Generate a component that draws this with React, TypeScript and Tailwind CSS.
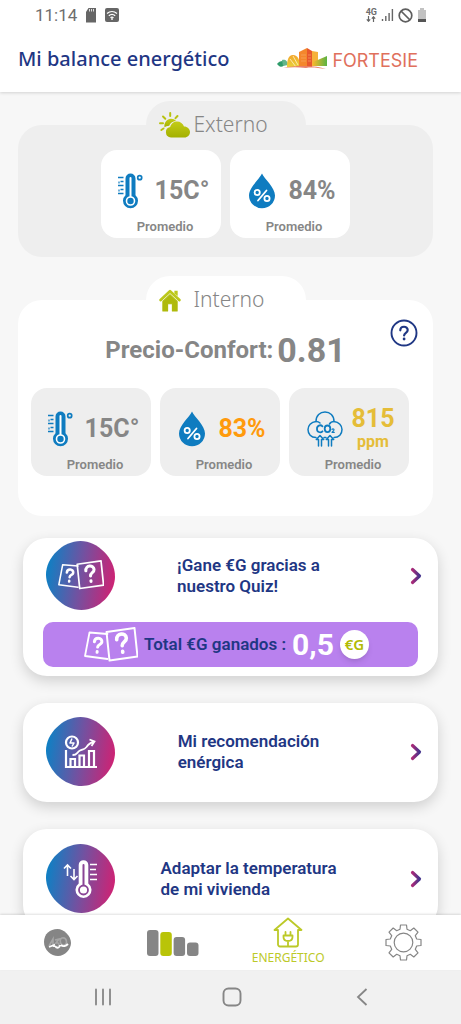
import type { ReactNode } from "react";

const BLUE = "#0f7cc0";

function ThermoIcon() {
  return (
    <svg width="26" height="36" viewBox="0 0 26 36" fill="none" aria-hidden>
      <path
        d="M8.500 5.500a5 5 0 0 1 10 0v16.700a7.500 7.500 0 1 1-10 0z"
        fill={BLUE}
      />
      <path d="M13.500 5v20" stroke="#fff" strokeWidth="2" strokeLinecap="round" />
      <circle cx="13.500" cy="28" r="4" fill={BLUE} stroke="#fff" strokeWidth="1.600" />
      <circle cx="22.700" cy="4.700" r="2" stroke={BLUE} strokeWidth="1.700" />
      <path
        d="M1 4.500h5.500M3.500 8.500h3M1 12.500h5.500M3.500 16.500h3M1 20.500h5.500"
        stroke={BLUE}
        strokeWidth="1.500"
      />
      <path d="M2 10.500v-2M2 18.500v-2" stroke={BLUE} strokeWidth="1.200" />
    </svg>
  );
}

function DropIcon() {
  return (
    <svg width="28" height="36" viewBox="0 0 28 36" fill="none" aria-hidden>
      <path
        d="M14 0.500C16.500 6 27 14.500 27 22.500a13 12.800 0 0 1-26 0C1 14.500 11.500 6 14 0.500z"
        fill={BLUE}
      />
      <g stroke="#fff" strokeWidth="1.800">
        <circle cx="9.200" cy="19.500" r="2.600" />
        <circle cx="19" cy="25.500" r="2.600" />
        <path d="M18.500 17.500l-8.500 10" strokeLinecap="round" />
      </g>
    </svg>
  );
}

function Co2Icon() {
  return (
    <svg width="36" height="36" viewBox="0 0 36 36" fill="none" aria-hidden>
      <g stroke={BLUE} strokeWidth="1.500" strokeLinecap="round" strokeLinejoin="round">
        <path d="M9 26.500C4 26.500 1 23 1 18.500c0-4 3-7.500 8-8C9 4.500 13 1 18 1s9 3.500 9 9.500c5 .5 8 4 8 8 0 4.500-3 8-8 8" />
        <path d="M9 10.500c1.800 0 3 .5 4 1.500M27 10.500c-2 0-3.500.8-4.500 2.500M17 26.500h2" />
        <path d="M11.500 35v-6.500H9.300L13 24.500l3.700 4h-2.200V35M21.500 35v-6.500h-2.200l3.700-4 3.700 4h-2.200V35" />
      </g>
      <g stroke={BLUE} strokeWidth="1.800" strokeLinecap="round" strokeLinejoin="round">
        <path d="M15.500 15.300a3.200 3.200 0 0 0-5.500 2.500 3.200 3.200 0 0 0 5.500 2.500" />
        <ellipse cx="20.500" cy="17.800" rx="2.800" ry="3.300" />
        <path d="M25 18.500c.8-1 2.500-.5 1.800.8L25 21.300h2.300" strokeWidth="1.200" />
      </g>
    </svg>
  );
}

function SunCloudIcon() {
  return (
    <svg width="32" height="26" viewBox="0 0 32 26" fill="none" aria-hidden>
      <defs>
        <linearGradient id="cloud" x1="0" y1="0" x2="0" y2="1">
          <stop offset="0" stopColor="#c3cc18" />
          <stop offset="1" stopColor="#a3b000" />
        </linearGradient>
      </defs>
      <path
        d="M5.500 15.500C4.500 11 8 6.800 12 6.800c2 0 3.800.7 5 2-3.500.5-6 2.500-6.800 5-2 .2-3.500.8-4.700 1.700z"
        fill="url(#cloud)"
      />
      <path
        d="M11.200 1v3M4 4.500l2.300 2.200M1 11.200h3M18.500 4l-2 2.200M2.300 18l2.200-1.500"
        stroke="#b8c210"
        strokeWidth="2"
        strokeLinecap="round"
      />
      <path
        d="M12 25.500a5.300 5.300 0 0 1-.8-10.500C12 11.500 15 9.500 18 9.500c3.300 0 6 2 7 5 3.500 0 6 2.500 6 5.500s-2.500 5.500-5.500 5.500z"
        fill="url(#cloud)"
      />
    </svg>
  );
}

function HomeIcon() {
  return (
    <svg width="22" height="23" viewBox="0 0 20 21" fill="none" aria-hidden>
      <path d="M3.500 11.300L10 5.200l6.500 6.100V20h-4.300v-6.500H7.800V20H3.500z" fill="#afba0c" stroke="#afba0c" strokeLinejoin="round" />
      <path d="M1.500 10L10 2l8.500 8" stroke="#bcc81c" strokeWidth="2.600" strokeLinecap="round" strokeLinejoin="round" />
      <path d="M14 1.500h3v5l-3-2.500z" fill="#bcc81c" />
    </svg>
  );
}

const QUESTION = "M-3-2.500c0-4.500 6.500-4.500 6.500-.5 0 2.500-3.200 2.300-3.200 4.800";

function QuizIcon({ width }: { width: number }) {
  return (
    <svg width={width} viewBox="0 0 54 36" fill="none" stroke="#fff" aria-hidden>
      <path
        d="M23.500 7L5.500 5.500 1 29l22.500 3"
        strokeWidth="1.800"
        strokeLinecap="round"
        strokeLinejoin="round"
      />
      <path d="M22.500 5L50.500 1l3 28.500-28 4z" strokeWidth="2" strokeLinejoin="round" />
      <g transform="translate(13.500 18) rotate(6) scale(1.150)" strokeWidth="2.600">
        <path d={QUESTION} strokeLinecap="round" />
        <path d="M.3 5.600v.8" strokeLinecap="round" />
      </g>
      <g transform="translate(37.500 16) rotate(-5) scale(1.500)" strokeWidth="2.400">
        <path d={QUESTION} strokeLinecap="round" />
        <path d="M.3 5.600v.6" strokeLinecap="round" />
      </g>
    </svg>
  );
}

function ChartIcon() {
  return (
    <svg width="34" height="34" viewBox="0 0 34 34" fill="none" stroke="#fff" strokeWidth="2.200" aria-hidden>
      <circle cx="8" cy="7.500" r="6" />
      <path d="M8 3.500L6 8h4L8 11.500" strokeWidth="1.500" strokeLinejoin="round" />
      <path d="M2 15v17h31" />
      <path d="M6.500 32v-8h4.500v8M15.500 32V20.500H20V32M25 32V16h5v16" />
      <path d="M8.500 20c5 0 4-2.500 7.500-4.500 4-2 3.500 0 6.500-3.500 2.500-3.500 4-4.500 7-5M25.500 4.500l5 2-3 4.500" strokeWidth="1.800" />
    </svg>
  );
}

function TempIcon() {
  return (
    <svg width="36" height="40" viewBox="0 0 36 40" fill="none" stroke="#fff" aria-hidden>
      <path d="M15.700 6a4.800 4.800 0 0 1 9.600 0v18.500a8 8 0 1 1-9.600 0z" fill="#fff" stroke="none" />
      <path d="M20.500 6v20" stroke="#8a4596" strokeWidth="2" strokeLinecap="round" />
      <circle cx="20.500" cy="31" r="4.500" stroke="#8a4596" strokeWidth="1.800" />
      <path d="M27 5.500h7M27 10.500h6M27 15.500h7M27 20.500h7" strokeWidth="1.500" />
      <path d="M4.500 17V6.500M1 9.500l3.500-3.500L8 9.500M11 10v10M7.500 17l3.500 3.500 3.500-3.500" strokeWidth="1.600" />
    </svg>
  );
}

function Blob({ children }: { children: ReactNode }) {
  return (
    <span className="relative flex size-[69px] shrink-0 items-center justify-center">
      <svg className="absolute inset-0" viewBox="0 0 69 69" aria-hidden>
        <defs>
          <linearGradient id="blob" x1="0" y1="0.450" x2="1" y2="0.600">
            <stop offset="0" stopColor="#0e80c4" />
            <stop offset="0.500" stopColor="#7351a0" />
            <stop offset="1" stopColor="#cf2273" />
          </linearGradient>
        </defs>
        <path
          d="M34.500 0C52 0 69 17.500 69 35.500 69 52.500 53 69 35.500 69 17 69 0 51.500 0 33.500 0 16.500 17 0 34.500 0z"
          fill="url(#blob)"
        />
      </svg>
      <span className="relative">{children}</span>
    </span>
  );
}

function Chevron() {
  return (
    <svg width="12" height="18" viewBox="0 0 12 18" fill="none" aria-hidden>
      <defs>
        <linearGradient id="chev" x1="0" y1="0" x2="1" y2="0">
          <stop offset="0" stopColor="#a82a78" />
          <stop offset="1" stopColor="#44348c" />
        </linearGradient>
      </defs>
      <path d="M2.500 2.500L9.500 9l-7 6.500" stroke="url(#chev)" strokeWidth="3.200" strokeLinecap="round" strokeLinejoin="round" />
    </svg>
  );
}

function FortesieLogo() {
  return (
    <svg width="52" height="24" viewBox="0 0 52 24" fill="none" aria-hidden>
      <defs>
        <linearGradient id="tri" x1="0" y1="0" x2="1" y2="0">
          <stop offset="0" stopColor="#f5b72a" />
          <stop offset="1" stopColor="#5bb343" />
        </linearGradient>
        <linearGradient id="dome" x1="0" y1="0" x2="0" y2="1">
          <stop offset="0" stopColor="#f3a52b" />
          <stop offset="1" stopColor="#e8d23a" />
        </linearGradient>
      </defs>
      <path d="M1 17c2-3 6-4 9-2-1 4-5 6-7 4z" fill="#2f9c6a" />
      <path d="M6 13c3-1 6 1 6 5l-5 1z" fill="#63b58b" />
      <path d="M11 20c0-6 1-12 6-12s7 5 7 12z" fill="url(#dome)" />
      <path d="M14 12l6 8M17 9l5 9" stroke="#fff3c8" strokeWidth="0.800" />
      <path d="M23 5l8-4v19h-8z" fill="#f4872c" />
      <path d="M31 1l5 3v16h-5z" fill="#e8582c" />
      <path d="M36 4l6 1v14h-6z" fill="#f6b13a" />
      <path d="M25 8h5M25 11h5M25 14h5M32 8h3M32 11h3M32 14h3" stroke="#f9b070" strokeWidth="0.600" />
      <path d="M37 15l14-6v10H37z" fill="url(#tri)" />
      <path d="M7 21c10-2 15-2 23-2s14 1 20 3c-8-1-14-2-20-1-8-1-15-1-23 0z" fill="#e98068" />
    </svg>
  );
}

type StatProps = {
  icon: ReactNode;
  value: string;
  unit?: string;
  bg: string;
  color?: string;
};

function StatCard({ icon, value, unit, bg, color = "text-[#868686]" }: StatProps) {
  return (
    <div className={`w-[120px] rounded-2xl pt-4 ${bg}`}>
      <div className={`flex h-[50px] items-center justify-center pl-1 ${unit ? "gap-2" : "gap-3"}`}>
        {icon}
        <div className={`text-center font-bold ${color}`}>
          <div className="text-[25px] leading-[26px]">{value}</div>
          {unit && <div className="text-base leading-5">{unit}</div>}
        </div>
      </div>
      <p className="pl-2 text-center text-[13px] leading-[22px] font-semibold text-[#868686]">
        Promedio
      </p>
    </div>
  );
}

function PanelTab({ icon, label, bg }: { icon: ReactNode; label: string; bg: string }) {
  return (
    <div className={`relative z-10 mx-auto -mb-6 flex h-12 w-40 items-center rounded-t-3xl pl-[13px] ${bg}`}>
      <span className="flex w-[35px] items-center">{icon}</span>
      <h2 className="font-['Noto_Sans',sans-serif] text-[21px] font-light text-[#868686]">{label}</h2>
    </div>
  );
}

const actions = [
  {
    icon: <ChartIcon />,
    lines: ["Mi recomendación", "enérgica"],
    pad: "pt-3.5 pb-4",
  },
  {
    icon: <TempIcon />,
    lines: ["Adaptar la temperatura", "de mi vivienda"],
    pad: "pt-[15px] pb-4",
  },
];

function ActionRow({ icon, lines }: { icon: ReactNode; lines: string[] }) {
  return (
    <a href="#" className="flex items-center pr-4 pl-[23px]">
      <Blob>{icon}</Blob>
      <span className="flex flex-1 justify-center pr-7">
        <span className="text-[17px] leading-[21px] font-semibold text-[#1f3784]">
          {lines[0]}
          <br />
          {lines[1]}
        </span>
      </span>
      <Chevron />
    </a>
  );
}

const cardClass = "rounded-3xl bg-white shadow-[0_5px_14px_rgba(0,0,0,0.16)]";

export default function App() {
  return (
    <div className="flex h-screen flex-col overflow-hidden bg-[#f7f7f7] font-[Roboto,sans-serif]">
      <header className="relative z-10 shrink-0 bg-white pb-1 shadow-[0_1px_3px_rgba(0,0,0,0.15)]">
        {/* Status bar */}
        <div className="flex h-[30px] items-center justify-between pr-[34px] pl-[35px] text-[#6e6e6e]">
          <div className="flex items-center gap-2">
            <span className="text-[17px] leading-5">11:14</span>
            <svg width="12" height="15" viewBox="0 0 12 15" aria-hidden>
              <path d="M3.500 0H11v14.500H1V4z" fill="#666" />
              <path d="M4.500 1v2.500M6.500 1v2.500M8.500 1v2.500" stroke="#ddd" strokeWidth="1" />
            </svg>
            <svg width="14" height="14" viewBox="0 0 14 14" fill="none" aria-hidden>
              <rect width="14" height="14" rx="2" fill="#666" />
              <path d="M2 5.500c3-2.700 7-2.700 10 0M3.800 7.800c2-1.800 4.400-1.800 6.400 0M5.500 9.800c1-.8 2-.8 3 0" stroke="#fff" strokeWidth="1.200" />
              <circle cx="7" cy="11" r="0.900" fill="#fff" />
            </svg>
          </div>
          <div className="flex items-center gap-1">
            <span className="flex flex-col items-center text-[9px] leading-2 font-bold">
              4G
              <svg width="10" height="6" viewBox="0 0 10 6" fill="none" stroke="#666" strokeWidth="1.200" aria-hidden>
                <path d="M2.500 0v5M.8 3.300l1.700 1.900 1.700-1.900M7.500 6V1M5.800 2.700L7.500.8l1.700 1.900" />
              </svg>
            </span>
            <svg width="13" height="14" viewBox="0 0 13 14" stroke="#666" strokeWidth="1.400" aria-hidden>
              <path d="M1.500 11v2M4.800 8v5M8.100 5v8M11.400 1v12" />
            </svg>
            <svg width="15" height="15" viewBox="0 0 15 15" fill="none" stroke="#5f5f5f" strokeWidth="1.700" aria-hidden>
              <circle cx="7.500" cy="7.500" r="6.300" />
              <path d="M3 3l9 9" />
            </svg>
            <svg width="10" height="14" viewBox="0 0 10 14" aria-hidden>
              <path d="M3 0h4v2h2v9H1V2h2z" fill="#c2c2c2" />
              <path d="M1 11h8v3H1z" fill="#555" />
            </svg>
          </div>
        </div>
        <div className="flex h-[58px] items-center justify-between pr-[43px] pl-[18px]">
          <h1 className="font-['Noto_Sans',sans-serif] text-xl font-medium text-[#1f3784]">
            Mi balance energético
          </h1>
          <div className="flex items-center gap-1">
            <FortesieLogo />
            <span className="pt-1 font-[Inter,sans-serif] text-lg leading-5 text-[#e0705c]">FORTESIE</span>
          </div>
        </div>
      </header>

      <main className="min-h-0 flex-1 overflow-y-auto [scrollbar-width:none]">
        <section className="mr-7 ml-[18px] pt-[9px]">
          <PanelTab icon={<SunCloudIcon />} label="Externo" bg="bg-[#eeeeee]" />
          <div className="flex justify-center gap-[9px] rounded-3xl bg-[#eeeeee] pt-[25px] pb-[19px]">
            <StatCard icon={<ThermoIcon />} value="15C°" bg="bg-white" />
            <StatCard icon={<DropIcon />} value="84%" bg="bg-white" />
          </div>
        </section>

        <section className="mr-7 ml-[18px] pt-[19px]">
          <PanelTab icon={<HomeIcon />} label="Interno" bg="bg-white" />
          <div className="relative rounded-3xl bg-white pt-[30px] pb-10">
            <p className="flex h-10 items-center justify-center gap-1 font-bold text-[#868686]">
              <span className="text-2xl">Precio-Confort:</span>
              <span className="text-[34px] leading-10">0.81</span>
            </p>
            <button type="button" aria-label="Ayuda" className="absolute top-[19px] right-[15px] z-20">
              <svg width="28" height="28" viewBox="0 0 28 28" fill="none" stroke="#1f3784" aria-hidden>
                <circle cx="14" cy="14" r="12.500" strokeWidth="1.900" />
                <path d="M10.300 11.300c0-4.800 7.400-4.600 7.400-.3 0 2.900-3.600 2.700-3.600 5.500" strokeWidth="2.200" strokeLinecap="round" />
                <circle cx="14.100" cy="20" r="1.400" fill="#1f3784" stroke="none" />
              </svg>
            </button>
            <div className="mt-[18px] flex justify-center gap-[9px] pr-[11px]">
              <StatCard icon={<ThermoIcon />} value="15C°" bg="bg-[#eeeeee]" />
              <StatCard icon={<DropIcon />} value="83%" bg="bg-[#eeeeee]" color="text-[#ff9a0c]" />
              <StatCard icon={<Co2Icon />} value="815" unit="ppm" bg="bg-[#eeeeee]" color="text-[#e5bd38]" />
            </div>
          </div>
        </section>

        <div className="mx-[23px] mt-[22px] flex flex-col gap-[27px]">
          <div className={`pt-[3px] pb-[9px] ${cardClass}`}>
            <ActionRow icon={<QuizIcon width={46} />} lines={["¡Gane €G gracias a", "nuestro Quiz!"]} />
            <div className="mx-5 mt-3 flex h-[45px] items-center justify-center gap-1.5 rounded-[10px] bg-[#b981ee] pr-2">
              <QuizIcon width={54} />
              <span className="text-[17px] font-semibold text-[#1f3784]">Total €G ganados :</span>
              <span className="text-3xl font-bold text-white">0,5</span>
              <span className="flex size-[29px] items-center justify-center rounded-full bg-white font-['Noto_Sans',sans-serif] text-[15px] font-semibold text-[#b1bb05] shadow-md">
                €G
              </span>
            </div>
          </div>

          {actions.map((action) => (
            <div key={action.lines[0]} className={`${action.pad} ${cardClass}`}>
              <ActionRow icon={action.icon} lines={action.lines} />
            </div>
          ))}
        </div>
      </main>

      {/* Bottom tabs */}
      <nav className="relative z-10 grid h-[55px] shrink-0 grid-cols-4 items-center justify-items-center bg-white shadow-[0_-1px_2px_rgba(0,0,0,0.12)]">
        <a href="#" aria-label="Inicio">
          <svg width="27" height="27" viewBox="0 0 27 27" fill="none" aria-hidden>
            <path d="M13.500 0C20 0 27 7 27 14c0 6-6 13-13 13S0 21 0 13 6 0 13.500 0z" fill="#858585" />
            <path d="M5 17l4-7v8M11 11l4-1-3 4c4-1 4 4 0 4M18 9c5-1 6 6 2 7s-5-6-2-7z" stroke="#a6a6a6" strokeWidth="1.600" />
            <path d="M5 18l5-2v2M11 17c2 3 5 2 5-1M17 16c2 2 5 1 7-1" stroke="#fff" strokeWidth="1.800" />
          </svg>
        </a>
        <a href="#" aria-label="Consumo">
          <svg width="52" height="26" viewBox="0 0 52 26" aria-hidden>
            <rect x="0" y="0" width="11.500" height="26" rx="3" fill="#858585" />
            <rect x="13.300" y="2" width="11.500" height="24" rx="3" fill="#b9c408" />
            <rect x="26.600" y="7" width="11.500" height="19" rx="3" fill="#858585" />
            <rect x="40" y="12.500" width="11.500" height="13.500" rx="3" fill="#858585" />
          </svg>
        </a>
        <a href="#" className="flex flex-col items-center">
          <svg width="30" height="31" viewBox="0 0 30 31" fill="none" stroke="#bcc928" strokeWidth="1.800" strokeLinejoin="round" strokeLinecap="round" aria-hidden>
            <path d="M5 13H1.500L15 1.500 28.500 13H25v14.500a2 2 0 0 1-2 2H7a2 2 0 0 1-2-2z" />
            <path d="M12.500 15v3.500M17.500 15v3.500M10.500 18.500h9v1.500c0 2.500-2 4-4.500 4s-4.500-1.500-4.500-4zM15 24v5" />
          </svg>
          <span className="font-['Noto_Sans',sans-serif] text-xs leading-5 text-[#bcc928]">ENERGÉTICO</span>
        </a>
        <a href="#" aria-label="Ajustes">
          <svg width="37" height="37" viewBox="-18.500 -18.500 37 37" fill="none" stroke="#868686" strokeWidth="1.200" strokeLinejoin="round" aria-hidden>
            <circle r="9.300" />
            <path d="M-3-17.500H3L3.500-13.200 6.800-11.800 10.300-14.500 14.500-10.300 11.800-6.800 13.200-3.500 17.500-3V3L13.200 3.500 11.800 6.800 14.500 10.300 10.300 14.500 6.800 11.800 3.500 13.200 3 17.500H-3L-3.500 13.200-6.800 11.800-10.300 14.500-14.500 10.300-11.800 6.800-13.200 3.500-17.500 3V-3L-13.200-3.500-11.800-6.800-14.500-10.300-10.300-14.500-6.800-11.800-3.500-13.200z" />
          </svg>
        </a>
      </nav>

      {/* System keys */}
      <div className="grid h-[54px] shrink-0 grid-cols-3 items-center justify-items-center bg-[#f1f1f1] pr-[34px] pl-[38px]">
        <button type="button" aria-label="Recientes">
          <svg width="18" height="18" viewBox="0 0 18 18" stroke="#868686" strokeWidth="1.800" strokeLinecap="round" aria-hidden>
            <path d="M2 1.500v15M9 1.500v15M16 1.500v15" />
          </svg>
        </button>
        <button type="button" aria-label="Inicio">
          <svg width="20" height="20" viewBox="0 0 20 20" fill="none" stroke="#868686" strokeWidth="1.900" aria-hidden>
            <rect x="1.500" y="1.500" width="17" height="17" rx="5" />
          </svg>
        </button>
        <button type="button" aria-label="Atrás">
          <svg width="12" height="18" viewBox="0 0 12 18" fill="none" stroke="#868686" strokeWidth="1.800" aria-hidden>
            <path d="M10.500 1L2 9l8.500 8" />
          </svg>
        </button>
      </div>
    </div>
  );
}
